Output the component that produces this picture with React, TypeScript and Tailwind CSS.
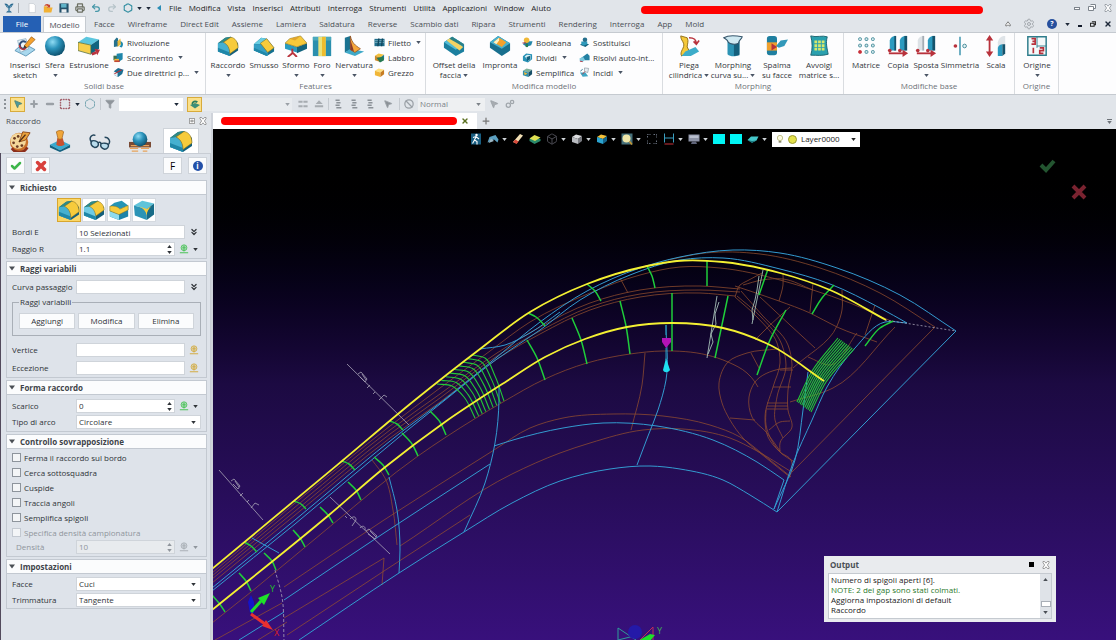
import React, { useState } from 'react';
import {
  Box as BoxIcon,
  Ban,
  Check,
  ChevronsDown,
  Filter,
  Hexagon,
  Minus,
  MousePointer2,
  Plus,
  Printer,
  Redo2,
  Settings,
  SquareDashed,
  Undo2,
  X,
} from 'lucide-react';

type IconProps = { className?: string };
type Pt = [number, number];

const Svg: React.FC<IconProps & { children: React.ReactNode }> = ({ className = '', children }) => (
  <svg viewBox="0 0 24 24" className={`shrink-0 ${className}`} aria-hidden="true">
    {children}
  </svg>
);

const Caret: React.FC<IconProps> = ({ className = '' }) => (
  <svg viewBox="0 0 6 4" className={`h-[3px] w-[5px] shrink-0 ${className}`} aria-hidden="true">
    <path d="M0 0h6L3 4z" fill="currentColor" />
  </svg>
);

/* Solid body icons */

const Cube = ({ top = '#5cc6de', left = '#2a9cc0', right = '#11647f' }: { top?: string; left?: string; right?: string }) => (
  <>
    <path d="M2 8 10 3l12 3-8 6z" fill={top} />
    <path d="M2 8l12 4v10L2 18z" fill={left} />
    <path d="M14 12l8-6v10l-8 6z" fill={right} />
  </>
);

const FilletIcon = ({ className }: IconProps) => (
  <Svg className={className}>
    <path d="M1 9 9 3l6-1 8 7v8l-9 6L1 18z" fill="#135f7c" />
    <path d="M1 9l8-6 6-1-8 6z" fill="#2f8a86" />
    <path d="M1 9l6-1c5 2 7 7 7 13v2L1 18z" fill="#45b0d0" />
    <path d="M1 14l13 5v4L1 18z" fill="#1f87a8" />
    <path d="M7 8l8-5.500c5 .5 8 5.500 8 11.500l-9 6.500C14 14 11 10 7 8z" fill="#f7cb3c" stroke="#8a7420" strokeWidth=".6" />
  </Svg>
);

const ChamferIcon = ({ className }: IconProps) => (
  <Svg className={className}>
    <path d="M1 10l8-7 6 1 8 10v4l-8 5-14-6z" fill="#14708f" />
    <path d="M1 10l8-7 6 1-6 6z" fill="#68cde2" />
    <path d="M1 10l8 0 7 9v4L1 17z" fill="#359fc4" />
    <path d="M1 14l14 6v3L1 17z" fill="#1f87a8" />
    <path d="M8 9l7-5 8 10-7 5z" fill="#f7cb3c" stroke="#7d6a1c" strokeWidth=".6" />
  </Svg>
);

const VariableFilletIcon = ({ className }: IconProps) => (
  <Svg className={className}>
    <path d="M1 9 9 3l7-1 7 7v8l-9 6L1 18z" fill="#135f7c" />
    <path d="M1 9l8-6 7-1-7 6z" fill="#2f8a86" />
    <path d="M1 9l8-1c3 2 5 5 5 10v5L1 18z" fill="#6fcbe4" />
    <path d="M1 14l13 5v4L1 18z" fill="#1f87a8" />
    <path d="M7 8l9-5.500c4 1 7 4.500 7 9.500l-9 6.500C13 13 11 10 7 8z" fill="#f7cb3c" stroke="#8a7420" strokeWidth=".6" />
  </Svg>
);

const FaceFilletIcon = ({ className }: IconProps) => (
  <Svg className={className}>
    <path d="M2 8v11l10 4V11zM22 8v11l-10 4V11z" fill="#1c83a8" />
    <path d="M2 13l10 4v6L2 19z" fill="#8fdbee" />
    <path d="M2 8l5-4 8-2 7 5-9 4z" fill="#2595b5" />
    <path d="M2 8c4-1 9 0 11 3l9-4v5l-10 5L2 13z" fill="#f7cb3c" stroke="#7d6a1c" strokeWidth=".5" />
  </Svg>
);

const CornerIcon = ({ className }: IconProps) => (
  <Svg className={className}>
    <path d="M1 7l9-5 13 3-8 6z" fill="#5fc4da" />
    <path d="M1 7l14 4v12L2 18z" fill="#2b94b6" />
    <path d="M15 11l8-6v12l-8 6z" fill="#176b87" />
    <path d="M6 8l9 3 5-3c-3 3-5 6-5 10-1-5-4-8-9-10z" fill="#f7cb3c" />
  </Svg>
);

const SketchIcon = ({ className }: IconProps) => (
  <Svg className={className}>
    <path d="M1 17 10 9l13 7-10 7z" fill="#a9d8ee" stroke="#5b94b5" />
    <path d="M4 6l9-2 3 11-9 4z" fill="#eef5f9" stroke="#7fa6bd" strokeWidth=".8" />
    <path d="M13 8c-4-3-8 1-6 5 2 3 6 2 7-1" fill="none" stroke="#2f4c76" strokeWidth="2" />
    <path d="M6 11c0 5 5 6 7 3" fill="none" stroke="#b8323c" strokeWidth="1.500" />
    <path d="M11 12 19 2l4 3-9 9z" fill="#f5a12c" stroke="#9a5a16" strokeWidth=".8" />
    <path d="M10 14l1.500-2.500 2.500 2.500z" fill="#333" />
  </Svg>
);

const SphereIcon = ({ className }: IconProps) => (
  <Svg className={className}>
    <defs>
      <radialGradient id="ball" cx=".38" cy=".3" r=".75">
        <stop offset="0" stopColor="#8fdcf4" />
        <stop offset=".45" stopColor="#2b93bb" />
        <stop offset="1" stopColor="#0b4a66" />
      </radialGradient>
    </defs>
    <circle cx="12" cy="12" r="11" fill="url(#ball)" />
  </Svg>
);

const ExtrudeIcon = ({ className }: IconProps) => (
  <Svg className={className}>
    <path d="M0 8 9 2l14 3-9 6z" fill="#5cc6de" />
    <path d="M14 11l9-6v10l-9 6z" fill="#11647f" />
    <path d="M0 8l14 3v10L0 17z" fill="#f6cf4c" stroke="#4d6a3c" strokeWidth=".8" />
    <path d="M15 21l5-2" stroke="#b8323c" strokeWidth="3" />
    <path d="M18 15l6 1-3 6z" fill="#b8323c" />
  </Svg>
);

const DraftIcon = ({ className }: IconProps) => (
  <Svg className={className}>
    <path d="M0 9l13 4v6L0 15z" fill="#2a9cc0" />
    <path d="M13 13l11-4v6l-11 5z" fill="#11647f" />
    <path d="M0 9 5 4l12-3 7 8-11 4z" fill="#f7c93a" stroke="#7d6a1c" strokeWidth=".6" />
    <path d="M5 4l12-3-6 5z" fill="#e0a52e" />
    <path d="M8 15v5l-5 4M8 19l5 5" stroke="#b8323c" strokeWidth="2" fill="none" />
  </Svg>
);

const HoleIcon = ({ className }: IconProps) => (
  <Svg className={className}>
    <path d="M2 2h20v21H2z" fill="#2a8fae" />
    <path d="M2 2h20v4H2z" fill="#4aa9bd" />
    <path d="M8 2h8v21H8z" fill="#e9e27a" />
    <path d="M12 2h4v21h-4z" fill="#eebc2e" />
  </Svg>
);

const RibIcon = ({ className }: IconProps) => (
  <Svg className={className}>
    <path d="M2 3l6-2v15L2 19z" fill="#1b7391" />
    <path d="M2 19l6-4 15 3-10 5z" fill="#3fa9c8" />
    <path d="M8 1c2 8 5 10 11 14l-6 4-5-3z" fill="#f5a63a" stroke="#8a4a1c" strokeWidth=".8" />
    <path d="M8 5v11l4 2z" fill="#8a3a2c" />
  </Svg>
);

const OffsetIcon = ({ className }: IconProps) => (
  <Svg className={className}>
    <path d="M1 8 10 2l13 8v8l-9 5L1 14z" fill="#1b7f9f" />
    <path d="M1 8l9-6 13 8-9 6z" fill="#51bcd6" />
    <path d="M4 6l4-3 14 10-4 4z" fill="#f3d364" />
    <path d="M7 4l3-2 13 8-2 2z" fill="#2b7f86" />
  </Svg>
);

const ImprintIcon = ({ className }: IconProps) => (
  <Svg className={className}>
    <path d="M1 8 10 1l13 8v8l-9 6L1 14z" fill="#186f8e" />
    <path d="M1 8 10 1l13 8-9 6z" fill="#48b2cf" />
    <path d="M5 8l6-5 8 5-5 5z" fill="#f5a12c" />
    <path d="M5 8l6-5v3l-3 4z" fill="#fff3c4" />
  </Svg>
);

const BendIcon = ({ className }: IconProps) => (
  <Svg className={className}>
    <path d="M3 1l7 2c2 4 0 7 0 10l2 4-8 6c-3-5 4-9 2-14-1-3-3-4-3-8z" fill="#f5c93a" stroke="#8c6a14" />
    <path d="M8 18l11-5 4 5-9 5-10 0z" fill="#3dacc9" />
    <path d="M12 3c6 0 8 2 8 7m-3-3l3 3 3-4" fill="none" stroke="#b8323c" strokeWidth="1.800" />
  </Svg>
);

const MorphIcon = ({ className }: IconProps) => (
  <Svg className={className}>
    <path d="M6 6h13v15c-3 3-10 3-13 0z" fill="#2c93b4" />
    <path d="M13 7h6v15l-6 1z" fill="#145f7c" />
    <path d="M2 3c5-3 15-2 20-1-1 3-4 4-4 7-4 2-9 1-11-1-1-3-2-3-5-5z" fill="#cfe9f2" stroke="#35556b" strokeWidth="1.200" />
  </Svg>
);

const SpreadIcon = ({ className }: IconProps) => (
  <Svg className={className}>
    <rect x="1" y="1" width="11" height="21" rx="3" fill="#1f7fa0" />
    <path d="M1 8h11v9H1z" fill="#f0a02e" />
    <path d="M6 9l6 4-6 4z" fill="#b8323c" />
    <path d="M11 12l5-6 8-1-4 7-6 2z" fill="#3299ba" />
  </Svg>
);

const WrapIcon = ({ className }: IconProps) => (
  <Svg className={className}>
    <path d="M3 1c6 2 13-1 18 1-2 7 0 13 1 19-7 2-12 1-19 1 2-6 2-14 0-21z" fill="#2aa0ae" stroke="#17616f" />
    <path d="M7 6h3v3H7zM11 6h3v3h-3zM15 6h3v3h-3zM7 10h3v3H7zM11 10h3v3h-3zM15 10h3v3h-3zM7 14h3v3H7zM11 14h3v3h-3zM15 14h3v3h-3z" fill="#d7e86a" />
  </Svg>
);

const MatrixIcon = ({ className }: IconProps) => (
  <Svg className={className}>
    {[4, 11, 18].map((x) =>
      [3, 10, 17].map((y) => (
        <rect
          key={`${x}-${y}`}
          x={x}
          y={y}
          width="3"
          height="3"
          rx="1"
          fill={x === 4 && y === 17 ? '#c8323c' : '#d6ecf0'}
          stroke={x === 4 && y === 17 ? '#c8323c' : '#3e8795'}
        />
      ))
    )}
  </Svg>
);

const CopyBodyIcon = ({ className, ghost }: IconProps & { ghost?: boolean }) => (
  <Svg className={className}>
    <path d="M3 6c1-4 4-5 6-5v16H3z" fill={ghost ? '#dde2e6' : '#2b9abf'} />
    <path d="M8 1h2v16H8z" fill={ghost ? '#a5adb4' : '#15536c'} />
    <path d="M14 6c1-4 4-5 6-5v16h-6z" fill="#2b9abf" />
    <path d="M19 1h3v16h-3z" fill="#15536c" />
    <path d="M2 20h16" stroke="#b8323c" strokeWidth="2" />
    <path d="M17 16l6 4-6 4z" fill="#b8323c" />
    <circle cx="3" cy="17" r="2" fill="#b8323c" />
    <circle cx="14" cy="17" r="2" fill="#b8323c" />
  </Svg>
);

const MirrorIcon = ({ className }: IconProps) => (
  <Svg className={className}>
    <path d="M12 2v20" stroke="#3a93ad" strokeWidth="1.600" />
    <circle cx="7" cy="12" r="2" fill="#b8323c" />
    <circle cx="17" cy="12" r="2" fill="#e4f2f5" stroke="#3e8795" />
  </Svg>
);

const ScaleIcon = ({ className }: IconProps) => (
  <Svg className={className}>
    <path d="M5 4v16" stroke="#b8323c" strokeWidth="2" />
    <path d="M5 0l4 6H1zM5 24l4-6H1z" fill="#b8323c" />
    <path d="M14 8c1-5 4-7 8-7v21h-8z" fill="#dfe4e8" />
    <path d="M14 14c1-3 3-4 5-4v13h-5z" fill="#2b9abf" />
    <path d="M19 10h3v10l-3 3z" fill="#15536c" />
  </Svg>
);

const OriginIcon = ({ className }: IconProps) => (
  <Svg className={className}>
    <path d="M2 2h20v20H2z" fill="#f4f9fa" stroke="#2e7d8c" strokeWidth="1.600" />
    <path d="M12 2v12M12 12h10" stroke="#2e7d8c" />
    <path d="M6 4h4v6H6M7 7h3M8 14v6M15 14h4v3h-4v3h4" fill="none" stroke="#b8323c" strokeWidth="1.800" />
  </Svg>
);

/* Small ribbon row icons */

const RevolveIcon = ({ className }: IconProps) => (
  <Svg className={className}>
    <path d="M2 22V8l6-7 3 2v17z" fill="#26718d" />
    <path d="M10 22V9l6-6 2 12z" fill="#e8b83a" />
    <path d="M16 9c6 1 8 8 3 14l-5-2c4-3 4-8 2-12z" fill="#1d8aae" />
  </Svg>
);
const SweepIcon = ({ className }: IconProps) => (
  <Svg className={className}>
    <path d="M1 8h12v10H1z" fill="#3a6f52" />
    <path d="M8 4l13-2v14l-9 6-4-4z" fill="#1f86aa" />
    <path d="M3 15h10v7H3z" fill="#f0b837" />
    <path d="M3 20h12" stroke="#b8323c" strokeWidth="3" />
  </Svg>
);
const LoftIcon = ({ className }: IconProps) => (
  <Svg className={className}>
    <path d="M2 9l9-7 12 4-3 9-9 7-9-5z" fill="#1b6f93" />
    <path d="M2 10l8 3v8l-8-4z" fill="#e7eef2" />
    <path d="M3 15l16-9" stroke="#b8323c" strokeWidth="2.500" />
  </Svg>
);
const ThreadIcon = ({ className }: IconProps) => (
  <Svg className={className}>
    <path d="M1 4h22v16H1z" fill="#1f6d8b" />
    <path d="M1 8h22M1 12h22" stroke="#8fb9c8" strokeWidth="1.500" />
    <path d="M9 3h3l-2 17H7zM17 3h3l-2 17h-3z" fill="#12465c" />
  </Svg>
);
const LipIcon = ({ className }: IconProps) => (
  <Svg className={className}>
    <Cube top="#f3c03a" left="#c98a2a" right="#1c7a9b" />
    <path d="M6 13l14-3 2 8-9 5z" fill="#277a52" />
  </Svg>
);
const StockIcon = ({ className }: IconProps) => (
  <Svg className={className}>
    <Cube top="#ffe07c" left="#f1b637" right="#c77d22" />
  </Svg>
);
const BooleanIcon = ({ className }: IconProps) => (
  <Svg className={className}>
    <path d="M7 9h16l-3 9-10 3-8-5z" fill="#2487a9" />
    <circle cx="10" cy="7" r="6" fill="#f0b837" />
    <path d="M8 22v-8h5v8z" fill="#277a52" />
    <path d="M1 13h8" stroke="#b8323c" strokeWidth="2" />
  </Svg>
);
const DivideIcon = ({ className }: IconProps) => (
  <Svg className={className}>
    <path d="M2 9l7-6 13 2v11l-9 7-11-4z" fill="#2791b5" />
    <path d="M6 10l5-4 8 1v9l-5 3z" fill="#d9f0f6" />
    <path d="M10 11l8-3v8l-7 4z" fill="#14617e" />
  </Svg>
);
const SimplifyIcon = ({ className }: IconProps) => (
  <Svg className={className}>
    <Cube top="#7fb29a" left="#2d8fae" right="#164f68" />
    <path d="M4 11l8 3-6 4z" fill="#f0b837" />
  </Svg>
);
const ReplaceIcon = ({ className }: IconProps) => (
  <Svg className={className}>
    <path d="M2 17l8-4 12 3-8 6z" fill="#14617e" />
    <path d="M5 10h13v6l-8 3-5-3z" fill="#2e9abb" />
    <circle cx="13" cy="6" r="5" fill="#246f8d" />
  </Svg>
);
const SolveIcon = ({ className }: IconProps) => (
  <Svg className={className}>
    <path d="M3 14 18 3l5 5v10H12z" fill="#2380a2" />
    <path d="M1 14l8-3 4 6-5 5-6-2z" fill="#7cc9df" />
    <path d="M2 20l6 1" stroke="#b8323c" strokeWidth="2" />
  </Svg>
);
const EngraveIcon = ({ className }: IconProps) => (
  <Svg className={className}>
    <path d="M2 12l6 9 12-1-6-8z" fill="#3fa6c4" />
    <path d="M12 2l9 1-2 9-7-2z" fill="#e7eef2" stroke="#5b6b78" />
    <path d="M13 10l-6 6" stroke="#b8323c" strokeWidth="2" />
    <path d="M3 9l5-4" stroke="#256f8b" strokeWidth="2" />
  </Svg>
);

/* Side panel icons */

const PaletteIcon = ({ className }: IconProps) => (
  <Svg className={className}>
    <circle cx="11" cy="13" r="10" fill="#c9702b" />
    <circle cx="10" cy="12" r="8.500" fill="#f4d79a" />
    <path d="M11 13l4-11 8 1-5 8z" fill="#e9a13b" stroke="#8c4a1c" />
    <path d="M3 20a10 10 0 0 0 17-1" fill="none" stroke="#8c2f1c" strokeWidth="3" />
    <g fill="#6b3b23">
      <circle cx="6" cy="9" r="1.500" />
      <circle cx="5" cy="14" r="1.500" />
      <circle cx="9" cy="18" r="1.500" />
      <circle cx="14" cy="17" r="1.500" />
      <circle cx="10" cy="7" r="1.500" />
    </g>
    <path d="M11 13l7-8" stroke="#4b2a16" strokeWidth="1.500" />
  </Svg>
);
const StampIcon = ({ className }: IconProps) => (
  <Svg className={className}>
    <path d="M1 16l11-5 11 5-11 6z" fill="#3aa9cf" />
    <path d="M1 16l11 6v2L1 19zM23 16l-11 6v2l11-5z" fill="#12607f" />
    <path d="M9 9h6l2 7c-3 2-7 2-9 0z" fill="#c9502f" />
    <path d="M8 2c2-2 7-2 8 0l-2 8h-4z" fill="#f0a63a" stroke="#9a5a16" strokeWidth=".7" />
  </Svg>
);
const GlassesIcon = ({ className }: IconProps) => (
  <Svg className={className}>
    <g fill="#b9dcec" stroke="#24465c" strokeWidth="1.600">
      <path d="M3 12c2-1 6 0 7 2 1 3-1 5-4 5-3-1-5-4-3-7zM13 15c2-1 7-1 8 1s-1 5-4 5c-3-1-5-3-4-6z" />
      <path d="M10 14c1-1 3-1 3 1M2.500 13C-1 8 4 4 7 6M21 16c3-3 1-8-4-8" fill="none" />
    </g>
  </Svg>
);
const SceneIcon = ({ className }: IconProps) => (
  <Svg className={className}>
    <path d="M0 13h24v6H0z" fill="#7a4a34" />
    <path d="M2 17h20M1 20h9m3 0h9M3 23h7m5 0h5" stroke="#e8a35a" strokeWidth="1.500" />
    <circle cx="12" cy="10" r="8" fill="url(#ball)" />
  </Svg>
);
const PinIcon = ({ className = '' }: IconProps) => (
  <Svg className={className}>
    <circle cx="12" cy="9" r="7" fill="currentColor" fillOpacity=".35" stroke="currentColor" strokeWidth="2" />
    <path d="M12 4v14M8 9h8M2 21h20" stroke="currentColor" strokeWidth="2.500" />
  </Svg>
);
const CloseBox = ({ className = '' }: IconProps) => (
  <svg viewBox="0 0 8 8" className={`h-2 w-2 shrink-0 ${className}`} aria-hidden="true">
    <path d="M1 .5h1.500L4 2.200 5.500.5H7v1.200L5.400 4 7 6.300v1.200H5.500L4 5.800 2.500 7.500H1V6.300L2.600 4 1 1.700z" fill="#fff" stroke="currentColor" strokeWidth=".7" />
  </svg>
);

/* Title bar and tabs */

const menus = ['File', 'Modifica', 'Vista', 'Inserisci', 'Attributi', 'Interroga', 'Strumenti', 'Utilità', 'Applicazioni', 'Window', 'Aiuto'];
const ribbonTabs = [
  'Facce', 'Wireframe', 'Direct Edit', 'Assieme', 'Lamiera', 'Saldatura', 'Reverse', 'Scambio dati',
  'Ripara', 'Strumenti', 'Rendering', 'Interroga', 'App', 'Mold',
];

const TitleBar = () => (
  <header className="flex h-4 shrink-0 items-center pl-1 pr-1">
    <Svg className="h-2.5 w-2.5">
      <path d="M2 2c6 0 8 3 10 7 2-4 4-7 10-7l-5 8h-3l-1 8 5 4H6l5-4-1-8H7z" fill="#1d5f88" stroke="#1d5f88" />
      <path d="M6 5l4 5M18 5l-4 5M12 12v9" stroke="#9fd0e6" strokeWidth="1.500" />
    </Svg>
    <span className="ml-1 h-2.5 w-px bg-[#a9aeb4]" />
    <div className="ml-2 flex items-center gap-1.5">
      <button aria-label="Nuovo"><Svg className="h-2.5 w-2.5"><path d="M5 1h10l5 5v17H5z" fill="#fff" stroke="#a8aeb5" /></Svg></button>
      <button aria-label="Apri"><Svg className="h-2.5 w-2.5"><path d="M2 8h8l2 3h11l-3 12H2z" fill="#f2b134" /><path d="M3 8c2-6 8-7 12-3l2-2v8H9l3-3c-3-3-6-2-9 0z" fill="#c9442c" /></Svg></button>
      <button aria-label="Salva"><Svg className="h-2.5 w-2.5"><path d="M1 1h22v22H1z" fill="#24506a" /><path d="M5 2h13v9H5z" fill="#5fb3c9" /><path d="M6 15h12v8H6z" fill="#e8edf0" /></Svg></button>
      <button aria-label="Stampa"><Printer className="h-2.5 w-2.5 text-[#6c6f63]" strokeWidth={3} /></button>
      <button aria-label="Annulla"><Undo2 className="h-2.5 w-2.5 text-[#4697a8]" strokeWidth={3} /></button>
      <button aria-label="Ripeti"><Redo2 className="h-2.5 w-2.5 text-[#b6c3c9]" strokeWidth={3} /></button>
      <button aria-label="Rigenera"><Hexagon className="h-2.5 w-2.5 text-[#3b93a5]" strokeWidth={3} strokeDasharray="5 2" /></button>
    </div>
    <Caret className="ml-1 text-gray-800" />
    <Caret className="ml-1 text-gray-800" />
    <svg viewBox="0 0 4 6" className="ml-1.5 h-2 w-1" aria-hidden="true"><path d="M4 0v6L0 3z" fill="#2b8db5" /></svg>
    <nav className="ml-2 flex items-center gap-[7px] whitespace-nowrap text-[#1e1e1e]">
      {menus.map((item) => (
        <button key={item}>{item}</button>
      ))}
    </nav>
    <div className="ml-[90px] mt-1 h-2 w-[342px] shrink rounded-full bg-[#ff0000]" />
    <div className="ml-auto flex items-center gap-2 text-[#7d848c]">
      <button aria-label="Riduci"><span className="block h-[3px] w-[6px] border border-current bg-white" /></button>
      <button aria-label="Ripristina">
        <svg viewBox="0 0 8 8" className="h-2 w-2"><path d="M2.500 .5h5v4h-2M.5 2.500h5v4h-5z" fill="#fff" stroke="currentColor" /></svg>
      </button>
      <button aria-label="Chiudi"><CloseBox /></button>
    </div>
  </header>
);

const RibbonTabs = () => (
  <div className="flex h-4 shrink-0 items-stretch whitespace-nowrap pl-[3px] pr-1 text-[#4a4f55]">
    <button className="w-[38px] bg-[#2560b4] text-white">File</button>
    <button className="ml-0.5 w-[43px] border-x border-t border-[#c5cad0] bg-[#fdfdfe]">Modello</button>
    <nav className="ml-2 flex items-center gap-[13px]">
      {ribbonTabs.map((tab) => (
        <button key={tab}>{tab}</button>
      ))}
    </nav>
    <div className="ml-auto flex items-center gap-2 text-gray-800">
      <svg viewBox="0 0 8 8" className="mr-1 h-1.5 w-1.5" aria-hidden="true"><path d="M4 1l3 4v1.500H5.500L4 5 2.500 6.500H1V5z" fill="#fff" stroke="#555" /></svg>
      <button aria-label="Opzioni"><Settings className="h-3 w-3 text-[#a3a8ae]" /></button>
      <button aria-label="Guida" className="ml-1 flex h-2.5 w-2.5 items-center justify-center rounded-full bg-[#27509e] text-[7px] font-bold text-white">?</button>
      <Caret />
      <span className="mt-1 h-0.5 w-1 bg-gray-900" />
      <svg viewBox="0 0 8 8" className="h-1.5 w-1.5" aria-hidden="true"><path d="M2.500 1h5v4h-2M.5 3h5v4h-5z" fill="none" stroke="#222" strokeWidth="1.500" /></svg>
      <X className="h-2 w-2" strokeWidth={4} />
    </div>
  </div>
);

/* Ribbon */

interface BigButtonProps {
  icon: React.ReactNode;
  lines: string[];
  width: string;
  menu?: boolean;
}

const BigButton: React.FC<BigButtonProps> = ({ icon, lines, width, menu }) => (
  <button className={`flex h-[46px] shrink-0 flex-col items-center whitespace-nowrap ${width}`}>
    {icon}
    <span className="mt-[3px]">{lines[0]}</span>
    {lines[1] ? (
      <span className="flex items-center gap-0.5">
        {lines[1]}
        {menu && <Caret className="text-gray-600" />}
      </span>
    ) : (
      menu && <Caret className="mt-1 text-gray-600" />
    )}
  </button>
);

const SmallButton: React.FC<{ icon: React.ReactNode; label: string; menu?: boolean }> = ({ icon, label, menu }) => (
  <button className="flex h-[15px] items-center gap-[3px] whitespace-nowrap">
    {icon}
    {label}
    {menu && <Caret className="ml-0.5 text-gray-600" />}
  </button>
);

const Group: React.FC<{ label: string; width: string; children: React.ReactNode }> = ({ label, width, children }) => (
  <section className={`flex shrink-0 flex-col justify-between border-r border-[#d9dce0] pb-[3px] pt-0.5 ${width}`}>
    <div className="flex pl-1">{children}</div>
    <h2 className="text-center text-[#6d7278]">{label}</h2>
  </section>
);

const big = 'h-[22px] w-[22px]';
const small = 'h-[11px] w-[11px]';

const Ribbon = () => (
  <div className="flex h-[63px] shrink-0 border-y border-[#c5cad0] bg-[#fdfdfe] pl-[3px] text-[#33373c]">
    <Group label="Solidi base" width="w-[203px]">
      <BigButton icon={<SketchIcon className={big} />} lines={['Inserisci', 'sketch']} width="w-9" />
      <BigButton icon={<SphereIcon className={big} />} lines={['Sfera']} width="w-6" menu />
      <BigButton icon={<ExtrudeIcon className={big} />} lines={['Estrusione']} width="w-11" />
      <div className="pl-0.5">
        <SmallButton icon={<RevolveIcon className={small} />} label="Rivoluzione" />
        <SmallButton icon={<SweepIcon className={small} />} label="Scorrimento" menu />
        <SmallButton icon={<LoftIcon className={small} />} label="Due direttrici p..." menu />
      </div>
    </Group>
    <Group label="Features" width="w-[220px]">
      <BigButton icon={<FilletIcon className={big} />} lines={['Raccordo']} width="w-9" menu />
      <BigButton icon={<ChamferIcon className={big} />} lines={['Smusso']} width="w-9" />
      <BigButton icon={<DraftIcon className={big} />} lines={['Sformo']} width="w-7" menu />
      <BigButton icon={<HoleIcon className={big} />} lines={['Foro']} width="w-6" menu />
      <BigButton icon={<RibIcon className={big} />} lines={['Nervatura']} width="w-10" menu />
      <div>
        <SmallButton icon={<ThreadIcon className={small} />} label="Filetto" menu />
        <SmallButton icon={<LipIcon className={small} />} label="Labbro" />
        <SmallButton icon={<StockIcon className={small} />} label="Grezzo" />
      </div>
    </Group>
    <Group label="Modifica modello" width="w-[237px]">
      <BigButton icon={<OffsetIcon className={big} />} lines={['Offset della', 'faccia']} width="w-12" menu />
      <BigButton icon={<ImprintIcon className={big} />} lines={['Impronta']} width="w-11" />
      <div className="w-[57px]">
        <SmallButton icon={<BooleanIcon className={small} />} label="Booleana" />
        <SmallButton icon={<DivideIcon className={small} />} label="Dividi" menu />
        <SmallButton icon={<SimplifyIcon className={small} />} label="Semplifica" />
      </div>
      <div>
        <SmallButton icon={<ReplaceIcon className={small} />} label="Sostituisci" />
        <SmallButton icon={<SolveIcon className={small} />} label="Risolvi auto-int..." />
        <SmallButton icon={<EngraveIcon className={small} />} label="Incidi" menu />
      </div>
    </Group>
    <Group label="Morphing" width="w-[181px]">
      <BigButton icon={<BendIcon className={big} />} lines={['Piega', 'cilindrica']} width="w-11" menu />
      <BigButton icon={<MorphIcon className={big} />} lines={['Morphing', 'curva su...']} width="w-11" menu />
      <BigButton icon={<SpreadIcon className={big} />} lines={['Spalma', 'su facce']} width="w-11" />
      <BigButton icon={<WrapIcon className={big} />} lines={['Avvolgi', 'matrice s...']} width="w-10" />
    </Group>
    <Group label="Modifiche base" width="w-[171px]">
      <BigButton icon={<MatrixIcon className={big} />} lines={['Matrice']} width="w-9" />
      <BigButton icon={<CopyBodyIcon className={big} />} lines={['Copia']} width="w-7" />
      <BigButton icon={<CopyBodyIcon className={big} ghost />} lines={['Sposta']} width="w-7" menu />
      <BigButton icon={<MirrorIcon className={big} />} lines={['Simmetria']} width="w-10" />
      <BigButton icon={<ScaleIcon className={big} />} lines={['Scala']} width="w-8" />
    </Group>
    <Group label="Origine" width="w-[44px]">
      <BigButton icon={<OriginIcon className={big} />} lines={['Origine']} width="w-9" menu />
    </Group>
  </div>
);

/* Selection toolbar */

const SelectionBar = () => (
  <div className="flex h-[18px] shrink-0 items-center gap-1 pl-1 text-[#9aa0a6]">
    <span className="h-2.5 border-l-2 border-dotted border-[#8a9096]" />
    <button aria-label="Seleziona" className="flex h-[15px] w-[15px] items-center justify-center border border-[#d8ab3c] bg-[#fbe08a]">
      <MousePointer2 className="h-2.5 w-2.5 fill-[#4b9a9d] text-[#4b7f72]" />
    </button>
    <Plus className="h-2.5 w-2.5" strokeWidth={5} />
    <Minus className="ml-0.5 h-2.5 w-2.5" strokeWidth={6} />
    <SquareDashed className="h-3 w-3 text-[#a4616c]" strokeWidth={3} />
    <Caret className="text-gray-800" />
    <Hexagon className="h-3 w-3 text-[#7ca9b4]" strokeWidth={2} strokeDasharray="4 2" />
    <span className="h-3 w-px bg-[#c5cad0]" />
    <Filter className="h-2.5 w-2.5 fill-[#8f959b]" />
    <label className="flex h-[13px] w-16 items-center bg-white pr-1 text-gray-800">
      <input aria-label="Filtro" className="w-full min-w-0 bg-transparent outline-none" />
      <Caret />
    </label>
    <button aria-label="Aggiorna selezione" className="flex h-[15px] w-[15px] items-center justify-center border border-[#d8ab3c] bg-[#fbe08a]">
      <Svg className="h-3 w-3">
        <path d="M2 14l10-4 10 4-10 7z" fill="#3c8f78" />
        <path d="M5 12c0-7 8-9 13-5l-3 3c-3-2-7-1-7 3z" fill="#2b7d5e" />
      </Svg>
    </button>
    <div className="-ml-1 flex h-[13px] w-[90px] items-center justify-end bg-[#e9ecef] pr-0.5"><Caret /></div>
    <Svg className="ml-0.5 mr-0.5 h-2.5 w-2.5"><path d="M1 4h10v5H1zM13 4h10v5H13zM1 15h10v5H1zM13 15h10v5H13z" fill="#a7acb1" /></Svg>
    <Svg className="h-2.5 w-2.5"><path d="M4 12 12 3l9 9zM2 15h20v5H2z" fill="#a7acb1" /></Svg>
    <span className="h-3 w-px bg-[#c5cad0]" />
    {['a', 'b', 'c'].map((key) => (
      <Svg key={key} className="mr-0.5 h-2.5 w-2.5"><path d="M6 1h10v4H6zM8 7h10v4H8zM6 13h10v4H6zM8 19h12v4H8z" fill="#8b9197" /></Svg>
    ))}
    <MousePointer2 className="ml-0.5 mr-0.5 h-2.5 w-2.5 fill-[#8b9197]" />
    <span className="h-3 w-px bg-[#c5cad0]" />
    <Ban className="h-2.5 w-2.5" strokeWidth={3} />
    <label className="flex h-[13px] w-[67px] items-center bg-[#eef0f2] pl-0.5 pr-1 text-[#7c8288]">
      <select aria-label="Modo di selezione" className="w-full appearance-none bg-transparent outline-none">
        <option>Normal</option>
      </select>
      <Caret />
    </label>
    <MousePointer2 className="mr-0.5 h-2.5 w-2.5 fill-[#a7acb1]" />
    <Svg className="h-2.5 w-2.5">
      <circle cx="8" cy="15" r="5" fill="none" stroke="#a0a6ac" strokeWidth="3" />
      <circle cx="17" cy="7" r="4" fill="none" stroke="#a0a6ac" strokeWidth="3" />
    </Svg>
  </div>
);

/* Side panel */

const Section: React.FC<{ title: string; className: string; children: React.ReactNode }> = ({ title, className, children }) => (
  <section className="border border-[#c3c9d1] border-t-0">
    <h3 className="flex h-[15px] items-center gap-[5px] border-y border-[#c3c9d1] bg-[#fbfcfd] pl-0.5 font-bold text-[#3f444a]">
      <Caret className="h-[5px] w-[6px] text-[#4a4f55]" />
      {title}
    </h3>
    <div className={`flex flex-col px-[5px] ${className}`}>{children}</div>
  </section>
);

const Row: React.FC<{ label: string; id: string; disabled?: boolean; children: React.ReactNode }> = ({ label, id, disabled, children }) => (
  <div className={`flex h-[14px] items-center ${disabled ? 'text-[#8f959c]' : 'text-[#2f3338]'}`}>
    <label htmlFor={id} className={`w-16 shrink-0 whitespace-nowrap ${disabled ? 'pl-1' : ''}`}>{label}</label>
    {children}
  </div>
);

const field = 'h-[14px] min-w-0 flex-1 border border-[#cfd4da] bg-white px-0.5 outline-none';

const SpinField: React.FC<{ id: string; value: string; disabled?: boolean }> = ({ id, value, disabled }) => (
  <>
    <div className={`flex h-[14px] min-w-0 flex-1 items-center border border-[#cfd4da] px-0.5 ${disabled ? 'bg-[#e8ebee]' : 'bg-white'}`}>
      <input id={id} defaultValue={value} disabled={disabled} className="min-w-0 flex-1 bg-transparent outline-none" />
      <span className="flex flex-col gap-[3px]">
        <Caret className="h-[2px] w-[4px] rotate-180" />
        <Caret className="h-[2px] w-[4px]" />
      </span>
    </div>
    <span className="flex w-[26px] shrink-0 items-center gap-1 pl-1">
      <PinIcon className={`h-2.5 w-2.5 ${disabled ? 'text-[#aab0b6]' : 'text-[#4cc35a]'}`} />
      <Caret />
    </span>
  </>
);

const SelectField: React.FC<{ id: string; options: string[] }> = ({ id, options }) => (
  <div className="flex h-[14px] flex-1 items-center border border-[#cfd4da] bg-white pl-0.5 pr-1">
    <select id={id} className="w-full appearance-none bg-transparent outline-none">
      {options.map((option) => (
        <option key={option}>{option}</option>
      ))}
    </select>
    <Caret />
  </div>
);

const overlapChecks = [
  'Ferma il raccordo sul bordo',
  'Cerca sottosquadra',
  'Cuspide',
  'Traccia angoli',
  'Semplifica spigoli',
  'Specifica densità campionatura',
];

const filletModes = [
  { name: 'Raccordo spigoli', Icon: FilletIcon },
  { name: 'Raccordo variabile', Icon: VariableFilletIcon },
  { name: 'Raccordo facce', Icon: FaceFilletIcon },
  { name: 'Raccordo vertice', Icon: CornerIcon },
];

const SidePanel = () => {
  const [mode, setMode] = useState(0);
  const square = 'flex h-[17px] w-[19px] items-center justify-center border border-[#cfd4da] bg-[#fbfcfd]';

  return (
    <aside className="flex w-[213px] shrink-0 flex-col border-r-2 border-[#cfd3da] bg-[#dee3ea]">
      <div className="flex h-[15px] items-center bg-[#e1e5ea] pl-1.5 pr-1 text-[#4a4f55]">
        Raccordo
        <span className="ml-auto flex items-center gap-1">
          <svg viewBox="0 0 8 8" className="h-1.5 w-1.5" aria-hidden="true"><path d="M.5.5h7v7h-7zM2.500 3h3v2h-3z" fill="#fff" stroke="#777" /></svg>
          <CloseBox className="text-[#777]" />
        </span>
      </div>
      <div className="flex h-[25px] items-end bg-[#e1e5ea]">
        {[PaletteIcon, StampIcon, GlassesIcon, SceneIcon].map((Icon, index) => (
          <button key={index} aria-label={['Materiali', 'Timbro', 'Vista', 'Scena'][index]} className="flex h-[25px] w-10 items-center justify-center">
            <Icon className="h-[22px] w-[22px]" />
          </button>
        ))}
        <button aria-label="Raccordo" className="ml-[3px] flex h-[25px] w-9 items-center justify-center border-x border-t border-[#cfd4da] bg-white">
          <FilletIcon className="h-6 w-6" />
        </button>
      </div>
      <div className="flex flex-1 flex-col border-l border-[#524a5c]">
        <div className="flex flex-1 flex-col border-r border-t border-[#c8cdd4] pl-[5px] pr-[3px] pt-[3px]">
          <div className="flex gap-1.5">
            <button aria-label="OK" className={square}><Check className="h-3 w-3 text-[#3db54a]" strokeWidth={5} /></button>
            <button aria-label="Annulla" className={square}><X className="h-3.5 w-3.5 text-[#d8403c]" strokeWidth={6} /></button>
            <button className={`${square} ml-auto text-[10px]`}>F</button>
            <button aria-label="Informazioni" className={square}>
              <span className="flex h-2.5 w-2.5 items-center justify-center rounded-full bg-[#2350a8] text-[8px] font-bold text-white">i</span>
            </button>
          </div>
          <div className="mt-1.5 flex flex-col gap-0.5">
            <Section title="Richiesto" className="gap-[3px] pb-0.5 pt-[3px]">
              <div className="flex justify-center gap-px">
                {filletModes.map(({ name, Icon }, index) => (
                  <button
                    key={name}
                    aria-label={name}
                    onClick={() => setMode(index)}
                    className={`flex h-6 w-6 items-center justify-center border ${
                      mode === index ? 'border-[#d8a62e] bg-[#fbd766]' : 'border-[#d5dae0] bg-white'
                    }`}
                  >
                    <Icon className="h-[22px] w-[22px]" />
                  </button>
                ))}
              </div>
              <Row label="Bordi E" id="bordi">
                <input id="bordi" defaultValue="10 Selezionati" className={field} />
                <span className="w-4 shrink-0 pl-1"><ChevronsDown className="h-2.5 w-2.5" strokeWidth={3} /></span>
              </Row>
              <Row label="Raggio R" id="raggio">
                <SpinField id="raggio" value="1.1" />
              </Row>
            </Section>
            <Section title="Raggi variabili" className="pb-0.5 pt-1">
              <Row label="Curva passaggio" id="curva">
                <input id="curva" className={field} />
                <span className="w-4 shrink-0 pl-1"><ChevronsDown className="h-2.5 w-2.5" strokeWidth={3} /></span>
              </Row>
              <fieldset className="mt-[3px] border border-[#a9afb7] px-1.5 pb-1.5 text-[#2f3338]">
                <legend className="px-px">Raggi variabili</legend>
                <div className="mt-1.5 flex gap-[3px]">
                  {['Aggiungi', 'Modifica', 'Elimina'].map((label) => (
                    <button key={label} className="h-4 flex-1 border border-[#cfd4da] bg-[#fbfcfd]">{label}</button>
                  ))}
                </div>
              </fieldset>
              <div className="mt-[7px] flex flex-col gap-1">
                <Row label="Vertice" id="vertice">
                  <input id="vertice" className={field} />
                  <span className="w-4 shrink-0 pl-1"><PinIcon className="h-2.5 w-2.5 text-[#d3ad45]" /></span>
                </Row>
                <Row label="Eccezione" id="eccezione">
                  <input id="eccezione" className={field} />
                  <span className="w-4 shrink-0 pl-1"><PinIcon className="h-2.5 w-2.5 text-[#d3ad45]" /></span>
                </Row>
              </div>
            </Section>
            <Section title="Forma raccordo" className="gap-0.5 pb-0.5 pt-1">
              <Row label="Scarico" id="scarico">
                <SpinField id="scarico" value="0" />
              </Row>
              <Row label="Tipo di arco" id="arco">
                <SelectField id="arco" options={['Circolare', 'Conico']} />
              </Row>
            </Section>
            <Section title="Controllo sovrapposizione" className="pb-0.5 pt-px">
              {overlapChecks.map((label, index) => {
                const disabled = index === overlapChecks.length - 1;
                return (
                  <label key={label} className={`flex h-[15px] items-center gap-[3px] whitespace-nowrap ${disabled ? 'text-[#8f959c]' : 'text-[#2f3338]'}`}>
                    <input
                      type="checkbox"
                      disabled={disabled}
                      className="h-[9px] w-[9px] appearance-none border border-[#8d949c] bg-[#f3f5f7] checked:bg-[#2560b4] disabled:border-[#c3c9d1]"
                    />
                    {label}
                  </label>
                );
              })}
              <Row label="Densità" id="densita" disabled>
                <SpinField id="densita" value="10" disabled />
              </Row>
            </Section>
            <Section title="Impostazioni" className="gap-0.5 pb-px pt-[3px]">
              <Row label="Facce" id="facce">
                <SelectField id="facce" options={['Cuci', 'Separa']} />
              </Row>
              <Row label="Trimmatura" id="trimmatura">
                <SelectField id="trimmatura" options={['Tangente', 'Lineare']} />
              </Row>
            </Section>
          </div>
        </div>
      </div>
    </aside>
  );
};

/* Wireframe model */

const parse = (text: string): Pt[] => text.split(' ').map((pair) => pair.split(',').map(Number) as Pt);

const dist = (a: Pt, b: Pt) => Math.hypot(b[0] - a[0], b[1] - a[1]);

// Smooth curve through the points, tangents weighted by chord length
const spline = (text: string) => {
  const p = parse(text);
  const last = p.length - 1;
  const tangents = p.map((pt, i): Pt => {
    if (i === 0 || i === last) {
      const a = p[i === 0 ? 0 : last - 1];
      const b = p[i === 0 ? 1 : last];
      return [(b[0] - a[0]) / dist(a, b), (b[1] - a[1]) / dist(a, b)];
    }
    const d1 = dist(p[i - 1], pt);
    const d2 = dist(pt, p[i + 1]);
    const slope = (k: 0 | 1) =>
      (((pt[k] - p[i - 1][k]) / d1) * d2 + ((p[i + 1][k] - pt[k]) / d2) * d1) / (d1 + d2);
    return [slope(0), slope(1)];
  });
  let d = `M${p[0][0]} ${p[0][1]}`;
  for (let i = 0; i < last; i++) {
    const h = dist(p[i], p[i + 1]) / 3;
    const b = p[i];
    const c = p[i + 1];
    d += `C${b[0] + tangents[i][0] * h} ${b[1] + tangents[i][1] * h} ${c[0] - tangents[i + 1][0] * h} ${c[1] - tangents[i + 1][1] * h} ${c[0]} ${c[1]}`;
  }
  return d;
};

const yellowCurves = [
  '212,569 342,461 415,400 480,349 530,312 587,284 647,266 677,261 723,262 780,273 830,290 886,320',
  '212,610 329,515 384,468 445,422 507,381 545,357 585,339 627,327 672,323 723,328 770,345 824,381',
];

const greenTicks = [
  '212,595 219,603 225,612', '239,573 246,581 251,591', '264,553 272,561 276,570', '293,530 300,538 305,547',
  '320,507 328,515 333,523', '348,482 356,490 361,500', '374,457 383,465 389,475', '402,433 412,444 418,456',
  '430,411 440,422 446,435', '527,340 537,358 545,380', '572,318 581,340 587,364', '620,301 626,326 630,354',
  '672,293 672,351', '728,296 715,358', '786,310 770,340 757,375', '244,542 251,546 257,552', '294,501 301,504 306,509',
  '342,461 349,464 355,470', '390,421 397,424 403,430', '528,313 536,317 545,326', '587,284 595,291 601,301',
  '647,266 652,276 655,288', '707,261 707,286', '768,269 759,295', '834,285 822,298 812,314', '893,321 880,328 865,346',
];

const brownCurves = [
  '212,576 300,503 390,430 440,394 497,353 540,327 590,303 640,290 700,286 740,289',
  '212,579 300,507 390,434 440,398 497,356 540,331 590,307 640,294 700,290 740,292',
  '212,583 300,511 390,438 440,402 497,359 540,334 590,310 640,297 700,293 735,296',
  '212,573 300,499 390,426 440,388 490,351 530,322 590,293 640,275 680,267 720,268 780,280 813,290 850,303 893,322',
  '212,623 251,592 333,524 418,456 446,437 503,402 545,379 587,363 630,354 663,351 707,355 728,362 747,373 755,382 758,387',
  '494,450 530,428 563,418 613,414 663,416 710,425 740,437 765,456 791,477',
  '287,635 384,571 470,515', '400,546 512,474 560,453 590,443 643,430 683,429 730,438 757,451 790,471',
  '284,587 384,520 494,450', '284,618 384,558', '215,640 282,603', '258,640 287,622',
  '384,558 382,585', '372,460 385,478 393,510 397,545', '620,278 628,293', '645,353 642,385 631,430',
  '668,260 705,253 760,254 820,268 880,293 935,327', '935,327 792,472', '895,327 833,388 790,402',
  '777,349 747,353 728,362 719,383 722,403 730,420 743,438 765,457 790,477',
  '792,368 780,369 755,382 749,397 752,417 767,433 780,451',
  '735,297 757,317 777,343 780,363 773,387 765,417 768,437 780,452 791,460 792,470 789,478',
  '737,296 760,316 782,345 786,365 777,397 775,420 783,438',
  '741,291 762,315 788,345 792,365 788,390 788,410 792,427 780,443 780,452',
  '766,410 766,425 772,441 782,454 793,461', '767,403 788,403', '767,406 788,406', '766,409 788,409',
  '773,387 791,387', '780,370 793,370', '730,418 755,420', '769,430 780,422 790,421', '751,353 759,368',
  '735,297 740,285 747,281 762,273', '735,286 779,301 810,313 837,327 877,342', '743,285 762,280 783,279 813,290',
  '783,273 783,285 779,301', '813,283 810,312', '842,290 842,310 837,326 793,368', '875,305 865,335',
  '790,307 770,325 755,340', '760,297 790,325 815,348', '857,333 830,365 808,357',
];

const cyanCurves = [
  '212,588 295,520 404,430 444,400 497,357 540,322 587,291 640,268 680,257 733,250 780,253 837,268 900,295 956,331',
  '212,591 295,524 404,433 455,392 497,359 540,330 580,300 630,275 680,260 723,258 780,269 830,284 880,308 907,323',
  '956,331 777,512', '299,640 399,573 464,532 512,503 560,481 610,469 650,466 680,469 723,480 750,495 777,512',
  '494,446 513,440 563,428 603,423 657,426 713,440 757,462 784,480', '284,600 384,533 490,464', '239,640 284,612',
  '389,477 397,510 400,550 399,573', '499,387 499,400 495,443 485,483 464,532', '666,325 666,380 658,410 648,436 637,465',
  '808,372 803,410 795,460 774,509', '907,323 885,322 855,348 827,387 812,420 793,463 777,512', '784,480 774,509',
  '252,538 279,553', '480,349 505,345 530,333 560,312',
];

const interpolate = (from: string, to: string, count: number) => {
  const a = parse(from);
  const b = parse(to);
  return Array.from({ length: count }, (_, i) => {
    const t = i / (count - 1);
    return a.map((pt, k) => `${pt[0] + (b[k][0] - pt[0]) * t},${pt[1] + (b[k][1] - pt[1]) * t}`).join(' ');
  });
};

const greenBands = [
  ...interpolate('437,384 452,386 464,397 475,418', '472,355 485,358 495,376 504,401', 9),
  ...interpolate('797,402 812,371 838,338', '811,412 826,382 854,349', 10),
];

// Leader lines carrying the radius annotations
const leaders: [Pt, Pt][] = [
  [[347, 364], [409, 425]],
  [[219, 470], [263, 520]],
  [[330, 497], [390, 554]],
];

const marks = 'M358 374l3-2 6 7-2 3-5-5M362 374l4 6M367 388l3-3M373 394l2-2M379 400l5-5 3 2M231 481l3-2 6 7-2 3-5-5M235 481l4 6M240 496l3-3M247 502l2-2M251 508l4-5 4 2M345 516l2 2M350 519c3-3 6-3 6 1l-4 6M360 528c2-3 6-2 5 2M366 531l3-2 8 7-2 3-7-5M370 531l6 6';

const Model = () => (
  <svg viewBox="213 129 903 511" preserveAspectRatio="xMinYMin slice" className="h-full w-full" fill="none" role="img" aria-label="Modello wireframe">
    <g stroke="#98522f" strokeWidth=".8" opacity=".9">
      {brownCurves.map((c) => <path key={c} d={spline(c)} />)}
    </g>
    <g stroke="#339bd0" strokeWidth="1">
      {cyanCurves.map((c) => <path key={c} d={spline(c)} />)}
    </g>
    <g stroke="#a9a5b8" strokeWidth=".8">
      <path d={spline('275,570 282,597 284,640')} strokeDasharray="3 2" />
      <path d="M885 320L956 331" strokeDasharray="2 2" />
      {leaders.map(([a, b]) => <path key={a.join()} d={`M${a[0]} ${a[1]}L${b[0]} ${b[1]}`} />)}
      <path d={marks} />
      <path d="M717 296l-10 62M719 302l-4 12 1 10-5 10 2 8-5 12M763 270l-11 54M759 276l-2 14-2 10-3 10 1 10" stroke="#b9d7c9" />
    </g>
    <g stroke="#1fce3b" strokeWidth="1.500">
      {greenTicks.map((c) => <path key={c} d={spline(c)} />)}
    </g>
    <g stroke="#22c838" strokeWidth="1.100">
      {greenBands.map((c) => <path key={c} d={spline(c)} />)}
    </g>
    <g stroke="#f4f032" strokeWidth="1.800">
      {yellowCurves.map((c) => <path key={c} d={spline(c)} />)}
    </g>
    <path d="M662 338h9v4l-5 6-4-6z" fill="#b312b8" />
    <path d="M666 325v10M666 348v12" stroke="#2596b8" />
    <path d="M666 358l4 12c-2 3-6 3-7 0z" fill="#1ee0f0" />
    <g>
      <path d="M248 602l3-7 3 7v11l-4 0z" fill="#1414c8" />
      <path d="M251 612l10-11" stroke="#1fe02a" strokeWidth="3" />
      <path d="M258 598l12-5-6 12z" fill="#1fe02a" />
      <path d="M251 614l14 10" stroke="#e83030" strokeWidth="3" />
      <path d="M262 626l4-6 7 10z" fill="#e83030" />
      <text x="270" y="592" fontSize="9" fill="#1fc02a" fontFamily="Open Sans, sans-serif">Y</text>
      <text x="274" y="636" fontSize="9" fill="#d82020" fontFamily="Open Sans, sans-serif">X</text>
    </g>
    <g>
      <path d="M618 628v12M618 628l18 12M618 640l16-4" stroke="#2e9c9a" />
      <circle cx="635" cy="632" r="7" fill="#2419a8" />
      <path d="M640 640l13-13v13" stroke="#c02a5a" />
      <path d="M638 641l12-7 5 1-5 6z" fill="#1fe02a" />
      <text x="657" y="634" fontSize="9" fill="#3fb050" fontFamily="Open Sans, sans-serif">Y</text>
    </g>
    <path d="M1041 165l5 5 8-9" stroke="#235530" strokeWidth="4" />
    <path d="M1073 186l12 12M1085 186l-12 12" stroke="#7a2330" strokeWidth="4" />
  </svg>
);

/* Viewport toolbar */

const Tool: React.FC<{ name: string; menu?: boolean; children: React.ReactNode }> = ({ name, menu, children }) => (
  <button aria-label={name} className="flex shrink-0 items-center gap-[3px]">
    {children}
    {menu && <Caret className="text-[#d0d4d8]" />}
  </button>
);

const ViewportBar = () => (
  <div className="absolute inset-x-0 top-0 flex h-5 items-center gap-[5px] pl-[257px]">
    <Tool name="Naviga">
      <Svg className="h-3 w-3">
        <path d="M2 1h20v22H2z" fill="#185d80" />
        <circle cx="13" cy="4" r="2.500" fill="#fff" />
        <path d="M12 8l-3 6 5 3v6M9 14l-4 7M6 9l6-2 6 5" stroke="#fff" strokeWidth="2.200" fill="none" />
      </Svg>
    </Tool>
    <Tool name="Piano" menu>
      <Svg className="h-3 w-3"><path d="M1 19 5 8l12-4 6 9-2 6-7-6z" fill="#5b9fc0" /><path d="M3 20l5-9 6 5z" fill="#9db7c4" /></Svg>
    </Tool>
    <Tool name="Gomma">
      <Svg className="h-3 w-3"><path d="M2 18 16 2l6 3L9 21z" fill="#f1dfb4" /><path d="M2 18l5-5 6 4-4 5z" fill="#d8493a" /></Svg>
    </Tool>
    <Tool name="Strati">
      <Svg className="h-3 w-3"><path d="M1 12l10-3 12 3v4l-12 6-10-6z" fill="#2b8a6b" /><path d="M1 11l10-7 12 5-11 7z" fill="#dfe052" /></Svg>
    </Tool>
    <Tool name="Wireframe" menu><BoxIcon className="h-3 w-3 text-[#4a4a52]" /></Tool>
    <Tool name="Ombreggiato" menu><Svg className="h-3 w-3"><Cube top="#dcdde0" left="#b9bbc0" right="#77797f" /></Svg></Tool>
    <Tool name="Viste" menu><Svg className="h-3 w-3"><Cube top="#f6c23a" left="#2ba3d0" right="#14648a" /></Svg></Tool>
    <Tool name="Zoom" menu>
      <Svg className="h-3 w-3"><path d="M1 1h22v22H1z" fill="#46707a" /><circle cx="11" cy="11" r="8" fill="#efe6a8" /><path d="M17 17l5 6" stroke="#c9952e" strokeWidth="3" /></Svg>
    </Tool>
    <Tool name="Adatta"><Svg className="h-3 w-3"><path d="M3 9V3h6M15 3h6v6M21 15v6h-6M9 21H3v-6" fill="none" stroke="#8b97a8" strokeWidth="1.500" strokeDasharray="3 2" /></Svg></Tool>
    <Tool name="Quote" menu><Svg className="h-3 w-3"><path d="M3 1v18M21 1v18M3 10h18" stroke="#3a9fc0" strokeWidth="2" /><path d="M3 22h18" stroke="#c8323c" strokeWidth="2" /></Svg></Tool>
    <Tool name="Schermo" menu><Svg className="h-3 w-3"><path d="M1 3h22v14H1z" fill="#8d93a6" /><path d="M3 5h18v5H3z" fill="#b9bfce" /><path d="M8 17h8l2 5H6z" fill="#60657a" /></Svg></Tool>
    <Tool name="Colore linea"><span className="h-2.5 w-3 bg-[#00f5f5]" /></Tool>
    <Tool name="Colore faccia"><span className="h-2.5 w-3 bg-[#00f5f5]" /></Tool>
    <Tool name="Materiale" menu><Svg className="h-3 w-3"><path d="M1 14 8 7l15 0-4 8-9 4z" fill="#45c7c9" /><path d="M1 14l9 2 9-1-9 5z" fill="#1b7880" /></Svg></Tool>
    <label className="flex h-[15px] w-[88px] items-center gap-1 bg-white px-1 text-[#222]">
      <Svg className="h-2.5 w-2"><circle cx="12" cy="9" r="8" fill="#fdfbe0" stroke="#a8a860" strokeWidth="2" /><path d="M8 18h8v5H8z" fill="#8a8a70" /></Svg>
      <span className="h-[9px] w-[9px] shrink-0 rounded-full border border-[#9a9a30] bg-[#e3e04a]" />
      <select aria-label="Layer" className="min-w-0 flex-1 appearance-none bg-transparent outline-none">
        <option>Layer0000</option>
      </select>
      <Caret />
    </label>
  </div>
);

const OutputWindow = () => (
  <section className="absolute bottom-[18px] right-[60px] flex h-[66px] w-[232px] flex-col bg-[#e9ebee] px-1 pb-[3px] text-[#222]">
    <div className="flex h-[17px] items-center pl-0.5">
      <h2 className="font-bold text-[#4a4f55]">Output</h2>
      <span className="ml-auto h-[5px] w-[5px] bg-black" />
      <button aria-label="Chiudi output" className="ml-2 mr-0.5"><CloseBox className="text-[#777]" /></button>
    </div>
    <div className="flex flex-1 border border-[#c5cad0] bg-white">
      <div className="flex-1 py-px pl-0.5">
        <p>Numero di spigoli aperti [6].</p>
        <p className="text-[#2c7a2c]">NOTE: 2 dei gap sono stati colmati.</p>
        <p>Aggiorna impostazioni di default</p>
        <p>Raccordo</p>
      </div>
      <div className="flex w-[11px] flex-col items-center bg-[#dfe3e8] py-1 text-[#4a4f55]">
        <Caret className="rotate-180" />
        <span className="mb-1 mt-auto h-[6px] w-[10px] border border-[#a9afb7] bg-white" />
        <Caret />
      </div>
    </div>
  </section>
);

const App: React.FC = () => (
  <div className="flex h-screen flex-col overflow-hidden bg-[#e1e5ea] font-['Open_Sans','Noto_Sans',sans-serif] text-[8px] leading-[10px]">
    <TitleBar />
    <RibbonTabs />
    <Ribbon />
    <SelectionBar />
    <div className="flex min-h-0 flex-1">
      <SidePanel />
      <main className="flex min-w-0 flex-1 flex-col">
        <div className="flex h-4 shrink-0 items-center pr-1">
          <div className="flex h-4 w-[264px] items-center bg-white pl-2">
            <div className="h-2 flex-1 rounded-full bg-[#ff0000]" />
            <button aria-label="Chiudi documento" className="ml-1 mr-2"><X className="h-2 w-2 text-[#5b7020]" strokeWidth={4} /></button>
          </div>
          <button aria-label="Nuovo documento" className="ml-1"><Plus className="h-2.5 w-2.5 text-[#777]" strokeWidth={3} /></button>
          <span className="ml-auto flex flex-col items-center gap-px text-[#6d7278]">
            <span className="h-px w-[5px] bg-current" />
            <Caret />
          </span>
        </div>
        <div className="relative min-h-0 flex-1 bg-linear-to-b from-black from-5% via-[#1c0a42] via-50% to-[#38107c]">
          <Model />
          <ViewportBar />
          <OutputWindow />
        </div>
      </main>
    </div>
  </div>
);

export default App;
